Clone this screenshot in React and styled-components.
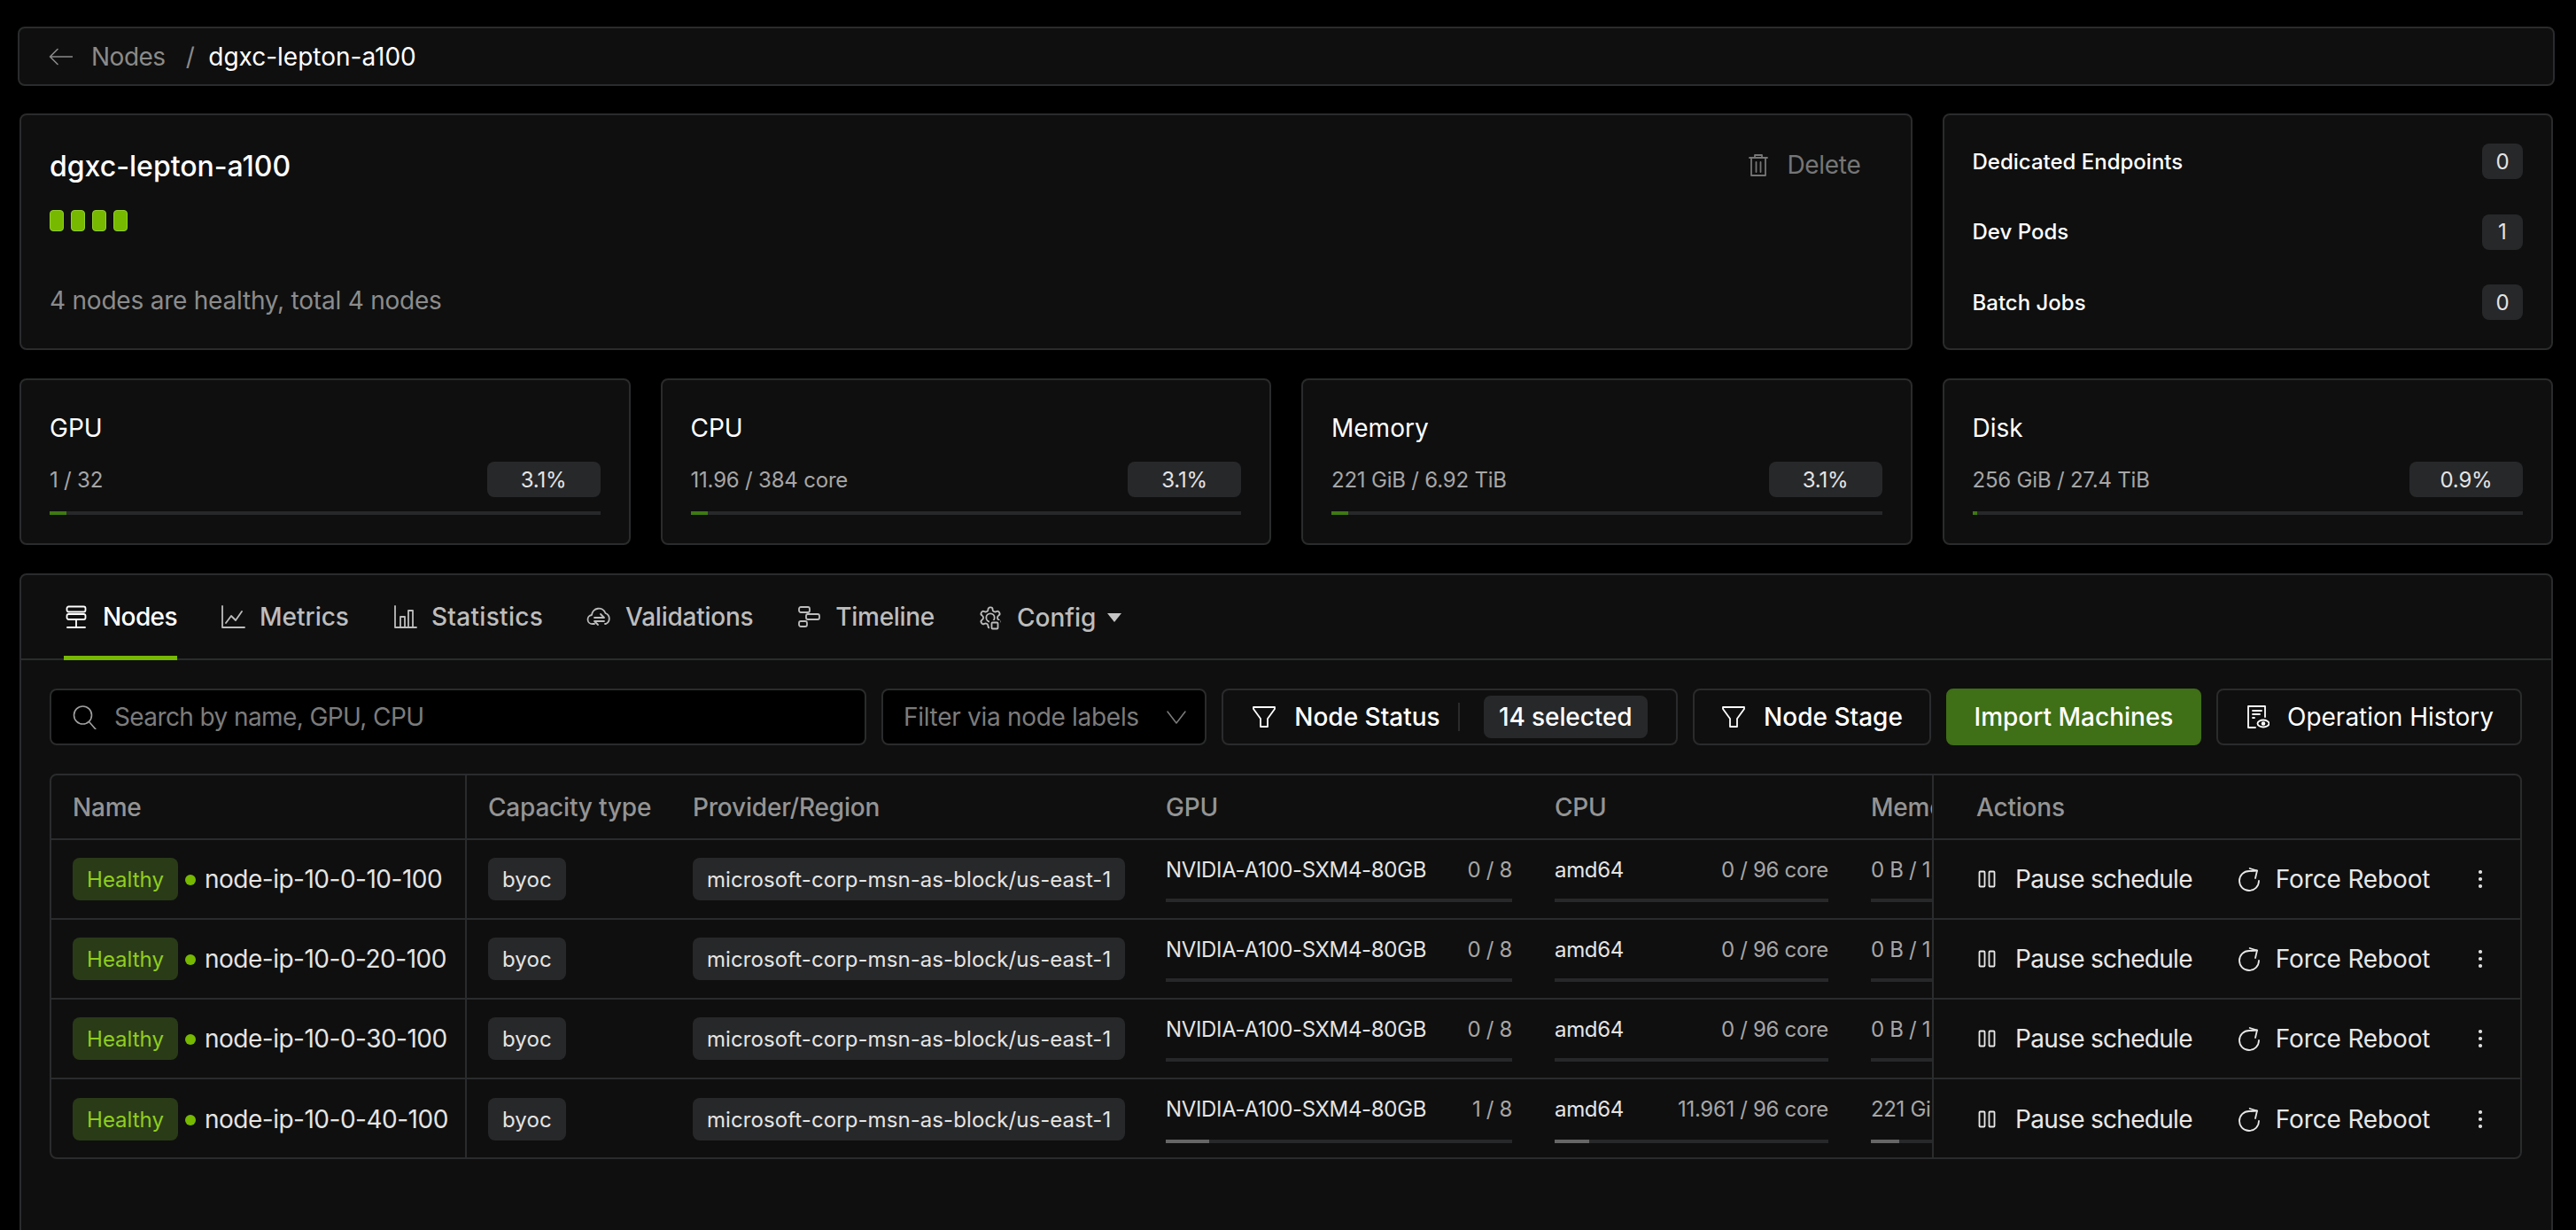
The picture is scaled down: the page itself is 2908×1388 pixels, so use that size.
import React from 'react'
import styled, { createGlobalStyle } from 'styled-components'

const GlobalStyle = createGlobalStyle`
    html, body {
        margin: 0;
        background: #000;
        height: 100%;
        overflow: hidden;
    }
    body {
        font-family: 'Inter', 'Liberation Sans', sans-serif;
        color: #fff;
    }
    * {
        box-sizing: border-box;
    }
`

const Page = styled.div`
    display: flex;
    flex-direction: column;
    height: 1388px;
    overflow: hidden;
    padding: 30px 24px 0 20px;
`

const Breadcrumb = styled.div`
    align-items: center;
    background: #0f0f0f;
    border: 2px solid #2a2b2c;
    border-radius: 8px;
    color: #8a8a8a;
    display: flex;
    flex: none;
    font-size: 28px;
    height: 67px;
    padding-left: 32px;
`

const Crumb = styled.span`
    color: ${({ $active }) => ($active ? '#fff' : '#8a8a8a')};
    letter-spacing: ${({ $active }) => ($active ? '0' : '-0.5px')};
    margin-left: ${({ $gap }) => $gap}px;
`

const Content = styled.div`
    display: flex;
    flex-direction: column;
    margin: 31px 2px 0;
`

const CardGrid = styled.div`
    display: grid;
    gap: 34px;
    grid-template-columns: repeat(4, 1fr);
    margin-bottom: 32px;
`

const Card = styled.div`
    background: #0f0f0f;
    border: 2px solid #2a2b2c;
    border-radius: 8px;
`

const ClusterCard = styled(Card)`
    display: flex;
    flex-direction: column;
    grid-column: span 3;
    height: 267px;
    padding: 39px 56px 0 32px;
`

const ClusterTop = styled.div`
    align-items: flex-start;
    display: flex;
    justify-content: space-between;
`

const ClusterName = styled.div`
    font-size: 32px;
    font-weight: 500;
    line-height: 38px;
`

const DeleteButton = styled.div`
    align-items: center;
    color: #767676;
    display: flex;
    font-size: 28px;
    gap: 18px;
    letter-spacing: -0.3px;
`

const HealthBlocks = styled.div`
    display: flex;
    gap: 8px;
    margin-top: 30px;
`

const HealthBlock = styled.div`
    background: #76b900;
    border: 1px solid #93cf2a;
    border-radius: 4px;
    height: 24px;
    width: 16px;
`

const ClusterSummary = styled.div`
    color: #8c8c8c;
    font-size: 28px;
    letter-spacing: -0.22px;
    line-height: 34px;
    margin-top: 61px;
`

const WorkloadCard = styled(Card)`
    display: flex;
    flex-direction: column;
    gap: 39.5px;
    padding: 32px 32px 0;
`

const WorkloadRow = styled.div`
    align-items: center;
    display: flex;
    font-size: 24px;
    font-weight: 500;
    height: 40px;
    justify-content: space-between;
`

const Chip = styled.span`
    align-items: center;
    background: #27282a;
    border-radius: 8px;
    display: inline-flex;
    font-size: 24px;
    justify-content: center;
`

const CountChip = styled(Chip)`
    color: #e4e4e4;
    font-weight: 400;
    height: 40px;
    width: 46px;
`

const StatCard = styled(Card)`
    height: 188px;
    padding: 37px 32px 0;
`

const StatTitle = styled.div`
    font-size: 28px;
    line-height: 34px;
`

const StatLine = styled.div`
    align-items: center;
    color: #a6a6a6;
    display: flex;
    font-size: 24px;
    height: 40px;
    justify-content: space-between;
    letter-spacing: -0.2px;
    margin-top: 21px;
`

const PercentChip = styled(Chip)`
    color: #e4e4e4;
    height: 40px;
    width: 128px;
`

const Track = styled.div`
    background: #27282a;
    height: 4px;
    overflow: hidden;
`

const StatTrack = styled(Track)`
    margin-top: 16px;
`

const Fill = styled.div`
    background: ${({ $color }) => $color};
    height: 100%;
`

const MainCard = styled(Card)`
    height: 800px;
`

const Tabs = styled.div`
    align-items: stretch;
    border-bottom: 2px solid #2a2b2c;
    display: flex;
    gap: 49px;
    height: 96px;
    padding: 0 0 0 48px;
`

const Tab = styled.div`
    align-items: center;
    border-bottom: 5px solid ${({ $active }) => ($active ? '#76b900' : 'transparent')};
    color: ${({ $active }) => ($active ? '#fff' : '#bdbdbd')};
    display: flex;
    font-size: 28px;
    font-weight: 500;
    gap: 16px;
    letter-spacing: ${({ $spacing }) => $spacing || 0}px;
    margin-bottom: -2px;
    padding-top: ${({ $drop }) => ($drop ? 5 : 3)}px;
`

const Caret = styled.span`
    border-left: 8px solid transparent;
    border-right: 8px solid transparent;
    border-top: 10px solid #c4c4c4;
    margin-left: -3px;
`

const Toolbar = styled.div`
    display: flex;
    gap: 17px;
    height: 64px;
    margin: 32px 33px 0 32px;
`

const SearchBox = styled.div`
    align-items: center;
    background: #000;
    border: 2px solid #2a2b2c;
    border-radius: 8px;
    color: #7c7c7c;
    display: flex;
    font-size: 28px;
    gap: 20px;
    letter-spacing: -0.6px;
    padding-left: 23px;
    width: 922px;
`

const LabelFilter = styled.div`
    align-items: center;
    background: #000;
    border: 2px solid #2a2b2c;
    border-radius: 8px;
    color: #7c7c7c;
    display: flex;
    font-size: 28px;
    justify-content: space-between;
    letter-spacing: -0.3px;
    padding: 0 18px 0 23px;
    width: 367px;
`

const ToolButton = styled.div`
    align-items: center;
    border: 2px solid #2a2b2c;
    border-radius: 8px;
    color: #fff;
    display: flex;
    font-size: 28px;
    font-weight: ${({ $weight }) => $weight || 500};
    gap: 20px;
    justify-content: center;
    width: ${({ $width }) => $width}px;
`

const ImportButton = styled(ToolButton)`
    background: #3f6f17;
    border-color: #3f6f17;
`

const StatusDivider = styled.span`
    background: #2a2b2c;
    height: 32px;
    margin-right: 7px;
    width: 2px;
`

const SelectedChip = styled(Chip)`
    font-size: 28px;
    font-weight: 500;
    height: 48px;
    letter-spacing: -0.1px;
    width: 185px;
`

const Table = styled.div`
    border: 2px solid #2a2b2c;
    border-radius: 8px;
    display: flex;
    height: 435px;
    margin: 32px 33px 0 32px;
    overflow: hidden;
`

const DataSide = styled.div`
    flex: 1;
    min-width: 0;
    overflow: hidden;
`

const ActionSide = styled.div`
    border-left: 2px solid #2a2b2c;
    flex: none;
    width: 664px;
`

const DataRow = styled.div`
    border-bottom: ${({ $last }) => ($last ? 'none' : '2px solid #2a2b2c')};
    display: grid;
    grid-template-columns: 469px 231px 534px 439px 357px 300px;
    height: ${({ $header }) => ($header ? '73px' : '90px')};
    width: 2330px;
`

const HeaderCell = styled.div`
    align-items: center;
    border-right: ${({ $divided }) => ($divided ? '2px solid #2a2b2c' : 'none')};
    color: #949494;
    display: flex;
    font-size: 28px;
    font-weight: 500;
    letter-spacing: -0.2px;
    padding-left: 24px;
`

const Cell = styled.div`
    align-items: center;
    border-right: ${({ $divided }) => ($divided ? '2px solid #2a2b2c' : 'none')};
    display: flex;
    min-width: 0;
    padding: 0 24px;
`

const NameCell = styled(Cell)`
    color: #e4e4e4;
    font-size: 28px;
    letter-spacing: -0.5px;
    white-space: nowrap;
`

const HealthyChip = styled(Chip)`
    background: #2a3b18;
    color: #8fce1e;
    flex: none;
    height: 48px;
    letter-spacing: 0;
    width: 119px;
`

const HealthyDot = styled.span`
    background: #76b900;
    border-radius: 50%;
    flex: none;
    height: 12px;
    margin: 2px 10px 0 8px;
    width: 12px;
`

const PlainChip = styled(Chip)`
    color: #e4e4e4;
    height: 48px;
    letter-spacing: 0.08px;
    padding: 0 16px;
    white-space: nowrap;
`

const MeterCell = styled.div`
    display: flex;
    flex-direction: column;
    justify-content: space-between;
    min-width: 0;
    padding: 20px 24px 18px;
`

const MeterText = styled.div`
    color: #e4e4e4;
    display: flex;
    font-size: 24px;
    justify-content: space-between;
    letter-spacing: -0.33px;
    line-height: 28px;
    white-space: nowrap;
`

const MeterValue = styled.span`
    color: #a6a6a6;
`

const ActionHeader = styled.div`
    align-items: center;
    border-bottom: 2px solid #2a2b2c;
    color: #949494;
    display: flex;
    font-size: 28px;
    font-weight: 500;
    height: 73px;
    letter-spacing: -0.2px;
    padding-left: 48px;
`

const ActionRow = styled.div`
    align-items: center;
    border-bottom: ${({ $last }) => ($last ? 'none' : '2px solid #2a2b2c')};
    color: #e8e8e8;
    display: flex;
    font-size: 28px;
    height: 90px;
    padding-left: 46px;
    position: relative;
`

const ActionItem = styled.div`
    align-items: center;
    display: flex;
    gap: ${({ $gap }) => $gap}px;
    letter-spacing: ${({ $spacing }) => $spacing}px;
    margin-right: 50px;
`

const DotsWrap = styled.div`
    align-items: center;
    display: flex;
    position: absolute;
    right: 31px;
`

const Line = ({ children, w = 1.8, ...rest }) => (
    <svg
        width={28}
        height={28}
        viewBox="0 0 28 28"
        fill="none"
        stroke="currentColor"
        strokeWidth={w}
        strokeLinecap="round"
        strokeLinejoin="round"
        style={{ flex: 'none' }}
        {...rest}
    >
        {children}
    </svg>
)

const BackIcon = () => (
    <Line w={1.6}>
        <path d="M27.5 14H2.5M11 5.5L2.5 14l8.5 8.5" />
    </Line>
)

const TrashIcon = () => (
    <Line color="#767676">
        <path d="M4 6h20M10 6V3h8v3M6 6v20h16V6M11.5 11v11M16.5 11v11" />
    </Line>
)

const NodesIcon = () => (
    <Line>
        <rect x="3.5" y="2.5" width="21" height="6" rx="2" />
        <rect x="3.5" y="11" width="21" height="6" rx="2" />
        <path d="M14 17v9M4 26h20" />
    </Line>
)

const MetricsIcon = () => (
    <Line>
        <path d="M2 2v24h25" />
        <path d="M6 21l6-8 5 5 7-10" />
    </Line>
)

const StatsIcon = () => (
    <Line>
        <path d="M3 2v24h24M9 26V14h5v12M18 26V7h5v19" />
    </Line>
)

const CloudIcon = () => (
    <Line>
        <path d="M9 22H7a5 5 0 0 1-1-10 8 8 0 0 1 15.5-2A6.5 6.5 0 0 1 22 22h-1" />
        <path d="M9 15h11l-4-4M20 19H9l4 4" />
    </Line>
)

const TimelineIcon = () => (
    <Line>
        <rect x="3" y="3" width="12" height="6" rx="2" />
        <rect x="11" y="11" width="15" height="6" rx="2" />
        <rect x="3" y="19" width="9" height="6" rx="2" />
    </Line>
)

const ConfigIcon = () => (
    <Line>
        <g transform="scale(1.1667)" strokeWidth="1.55">
            <path d="M12.22 2h-.44a2 2 0 0 0-2 2v.18a2 2 0 0 1-1 1.73l-.43.25a2 2 0 0 1-2 0l-.15-.08a2 2 0 0 0-2.73.73l-.22.38a2 2 0 0 0 .73 2.73l.15.1a2 2 0 0 1 1 1.72v.51a2 2 0 0 1-1 1.74l-.15.09a2 2 0 0 0-.73 2.73l.22.38a2 2 0 0 0 2.73.73l.15-.08a2 2 0 0 1 2 0l.43.25a2 2 0 0 1 1 1.73V20a2 2 0 0 0 2 2h.44a2 2 0 0 0 2-2v-.18a2 2 0 0 1 1-1.73l.43-.25a2 2 0 0 1 2 0l.15.08a2 2 0 0 0 2.73-.73l.22-.39a2 2 0 0 0-.73-2.73l-.15-.08a2 2 0 0 1-1-1.74v-.5a2 2 0 0 1 1-1.74l.15-.09a2 2 0 0 0 .73-2.73l-.22-.38a2 2 0 0 0-2.73-.73l-.15.08a2 2 0 0 1-2 0l-.43-.25a2 2 0 0 1-1-1.73V4a2 2 0 0 0-2-2z" />
            <circle cx="12" cy="12" r="4" />
        </g>
        <rect x="13" y="17" width="12" height="11" fill="#0f0f0f" stroke="none" />
        <rect x="15.5" y="19.5" width="7" height="7" rx="1" />
    </Line>
)

const SearchIcon = () => (
    <Line color="#a0a0a0" w={1.6}>
        <circle cx="12.5" cy="12" r="10" />
        <path d="M20 20l7 8" />
    </Line>
)

const ChevronIcon = () => (
    <Line color="#7c7c7c" w={1.5}>
        <path d="M4 8l10 13L24 8" />
    </Line>
)

const FunnelIcon = () => (
    <Line>
        <path d="M2 3h24v2l-8 11v9h-8v-9L2 5z" />
    </Line>
)

const HistoryIcon = () => (
    <Line>
        <path d="M12 26H4V2h19v12M9 7h10M9 11h8M9 15h2" />
        <ellipse cx="21" cy="21.5" rx="6.5" ry="4" />
        <circle cx="21" cy="21.5" r="1.4" fill="currentColor" />
    </Line>
)

const PauseIcon = () => (
    <Line>
        <rect x="5.5" y="5.5" width="6" height="17" rx="1" />
        <rect x="16.5" y="5.5" width="6" height="17" rx="1" />
    </Line>
)

const RebootIcon = () => (
    <Line>
        <path d="M23 4.5C20 5 17 5 14 5a11 11 0 1 0 11 11" />
        <path d="M14.7 2L23 4.5 21 13" />
    </Line>
)

const DotsIcon = () => (
    <Line>
        <circle cx="14" cy="6" r="1.2" />
        <circle cx="14" cy="14" r="1.2" />
        <circle cx="14" cy="22" r="1.2" />
    </Line>
)

const workloads = [
    { name: 'Dedicated Endpoints', count: 0 },
    { name: 'Dev Pods', count: 1 },
    { name: 'Batch Jobs', count: 0 },
]

const stats = [
    { name: 'GPU', usage: '1 / 32', percent: 3.1 },
    { name: 'CPU', usage: '11.96 / 384 core', percent: 3.1 },
    { name: 'Memory', usage: '221 GiB / 6.92 TiB', percent: 3.1 },
    { name: 'Disk', usage: '256 GiB / 27.4 TiB', percent: 0.9 },
]

const tabs = [
    { name: 'Nodes', icon: NodesIcon, active: true, spacing: -0.6 },
    { name: 'Metrics', icon: MetricsIcon },
    { name: 'Statistics', icon: StatsIcon, spacing: 0.3 },
    { name: 'Validations', icon: CloudIcon, spacing: -0.25 },
    { name: 'Timeline', icon: TimelineIcon, spacing: -0.3 },
    { name: 'Config', icon: ConfigIcon, caret: true },
]

const nodes = [
    { name: 'node-ip-10-0-10-100', gpu: '0 / 8', cpu: '0 / 96 core', memory: '0 B / 1.73 TiB', used: 0 },
    { name: 'node-ip-10-0-20-100', gpu: '0 / 8', cpu: '0 / 96 core', memory: '0 B / 1.73 TiB', used: 0 },
    { name: 'node-ip-10-0-30-100', gpu: '0 / 8', cpu: '0 / 96 core', memory: '0 B / 1.73 TiB', used: 0 },
    { name: 'node-ip-10-0-40-100', gpu: '1 / 8', cpu: '11.961 / 96 core', memory: '221 GiB / 1.73 TiB', used: 12.5 },
]

const Meter = ({ label, value, used }) => (
    <MeterCell>
        <MeterText>
            {label && <span>{label}</span>}
            <MeterValue>{value}</MeterValue>
        </MeterText>
        <Track>
            <Fill $color="#666" style={{ width: `${used}%` }} />
        </Track>
    </MeterCell>
)

export default function App() {
    return (
        <Page>
            <GlobalStyle />
            <Breadcrumb>
                <BackIcon />
                <Crumb $gap={21}>Nodes</Crumb>
                <Crumb $gap={23}>/</Crumb>
                <Crumb $active $gap={16}>dgxc-lepton-a100</Crumb>
            </Breadcrumb>
            <Content>
                <CardGrid>
                    <ClusterCard>
                        <ClusterTop>
                            <ClusterName>dgxc-lepton-a100</ClusterName>
                            <DeleteButton>
                                <TrashIcon />
                                Delete
                            </DeleteButton>
                        </ClusterTop>
                        <HealthBlocks>
                            {nodes.map((node) => (
                                <HealthBlock key={node.name} />
                            ))}
                        </HealthBlocks>
                        <ClusterSummary>4 nodes are healthy, total 4 nodes</ClusterSummary>
                    </ClusterCard>
                    <WorkloadCard>
                        {workloads.map((item) => (
                            <WorkloadRow key={item.name}>
                                {item.name}
                                <CountChip>{item.count}</CountChip>
                            </WorkloadRow>
                        ))}
                    </WorkloadCard>
                </CardGrid>
                <CardGrid>
                    {stats.map((stat) => (
                        <StatCard key={stat.name}>
                            <StatTitle>{stat.name}</StatTitle>
                            <StatLine>
                                {stat.usage}
                                <PercentChip>{stat.percent}%</PercentChip>
                            </StatLine>
                            <StatTrack>
                                <Fill $color="#3f7a12" style={{ width: `${stat.percent}%` }} />
                            </StatTrack>
                        </StatCard>
                    ))}
                </CardGrid>
                <MainCard>
                    <Tabs>
                        {tabs.map(({ name, icon: Icon, active, caret, spacing }) => (
                            <Tab key={name} $active={active} $spacing={spacing} $drop={caret}>
                                <Icon />
                                {name}
                                {caret && <Caret />}
                            </Tab>
                        ))}
                    </Tabs>
                    <Toolbar>
                        <SearchBox>
                            <SearchIcon />
                            Search by name, GPU, CPU
                        </SearchBox>
                        <LabelFilter>
                            Filter via node labels
                            <ChevronIcon />
                        </LabelFilter>
                        <ToolButton $width={515}>
                            <FunnelIcon />
                            Node Status
                            <StatusDivider />
                            <SelectedChip>14 selected</SelectedChip>
                        </ToolButton>
                        <ToolButton $width={269}>
                            <FunnelIcon />
                            Node Stage
                        </ToolButton>
                        <ImportButton $width={288}>Import Machines</ImportButton>
                        <ToolButton $width={345} $weight={400}>
                            <HistoryIcon />
                            Operation History
                        </ToolButton>
                    </Toolbar>
                    <Table>
                        <DataSide>
                            <DataRow $header>
                                <HeaderCell $divided>Name</HeaderCell>
                                <HeaderCell>Capacity type</HeaderCell>
                                <HeaderCell>Provider/Region</HeaderCell>
                                <HeaderCell>GPU</HeaderCell>
                                <HeaderCell>CPU</HeaderCell>
                                <HeaderCell>Memory</HeaderCell>
                            </DataRow>
                            {nodes.map((node, index) => (
                                <DataRow key={node.name} $last={index === nodes.length - 1}>
                                    <NameCell $divided>
                                        <HealthyChip>Healthy</HealthyChip>
                                        <HealthyDot />
                                        {node.name}
                                    </NameCell>
                                    <Cell>
                                        <PlainChip>byoc</PlainChip>
                                    </Cell>
                                    <Cell>
                                        <PlainChip>microsoft-corp-msn-as-block/us-east-1</PlainChip>
                                    </Cell>
                                    <Meter label="NVIDIA-A100-SXM4-80GB" value={node.gpu} used={node.used} />
                                    <Meter label="amd64" value={node.cpu} used={node.used} />
                                    <Meter value={node.memory} used={node.used} />
                                </DataRow>
                            ))}
                        </DataSide>
                        <ActionSide>
                            <ActionHeader>Actions</ActionHeader>
                            {nodes.map((node, index) => (
                                <ActionRow key={node.name} $last={index === nodes.length - 1}>
                                    <ActionItem $gap={18} $spacing={-0.7}>
                                        <PauseIcon />
                                        Pause schedule
                                    </ActionItem>
                                    <ActionItem $gap={16} $spacing={-0.15}>
                                        <RebootIcon />
                                        Force Reboot
                                    </ActionItem>
                                    <DotsWrap>
                                        <DotsIcon />
                                    </DotsWrap>
                                </ActionRow>
                            ))}
                        </ActionSide>
                    </Table>
                </MainCard>
            </Content>
        </Page>
    )
}
